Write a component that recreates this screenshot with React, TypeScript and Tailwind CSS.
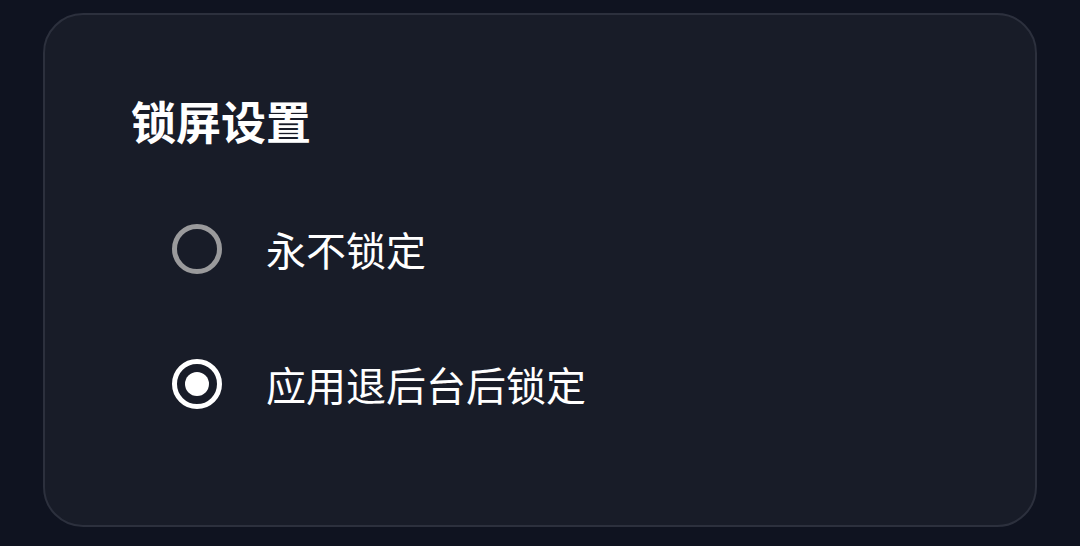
import React, { useState } from "react";

const font = { fontFamily: '"Noto Sans CJK SC", "Noto Sans", sans-serif' };

const Radio = ({ checked }: { checked: boolean }) =>
  checked ? (
    <span className="flex h-[50px] w-[50px] items-center justify-center rounded-full border-[5px] border-white">
      <span className="h-[24px] w-[24px] rounded-full bg-white" />
    </span>
  ) : (
    <span className="h-[50px] w-[50px] rounded-full border-[5px] border-[#9a9a9c]" />
  );

const App = () => {
  const [value, setValue] = useState("bg");
  const options = [
    { id: "never", label: "永不锁定" },
    { id: "bg", label: "应用退后台后锁定" },
  ];
  return (
    <div className="h-[546px] w-[1080px] bg-[#0f1320] px-[43px] pt-[13px]" style={font}>
      <div className="h-[514px] rounded-[40px] border-2 border-[#2c303d] bg-[#181c28] pl-[86px] pt-[76px]">
        <h2 className="text-[45px] font-bold leading-[60px] text-white">锁屏设置</h2>
        <div className="mt-[73px] flex flex-col gap-[85px] pl-[41px]">
          {options.map((o) => (
            <button
              key={o.id}
              onClick={() => setValue(o.id)}
              className="flex h-[50px] items-center gap-[44px] text-left outline-none"
            >
              <Radio checked={value === o.id} />
              <span className="text-[40px] leading-[50px] text-white">{o.label}</span>
            </button>
          ))}
        </div>
      </div>
    </div>
  );
};

export default App;
